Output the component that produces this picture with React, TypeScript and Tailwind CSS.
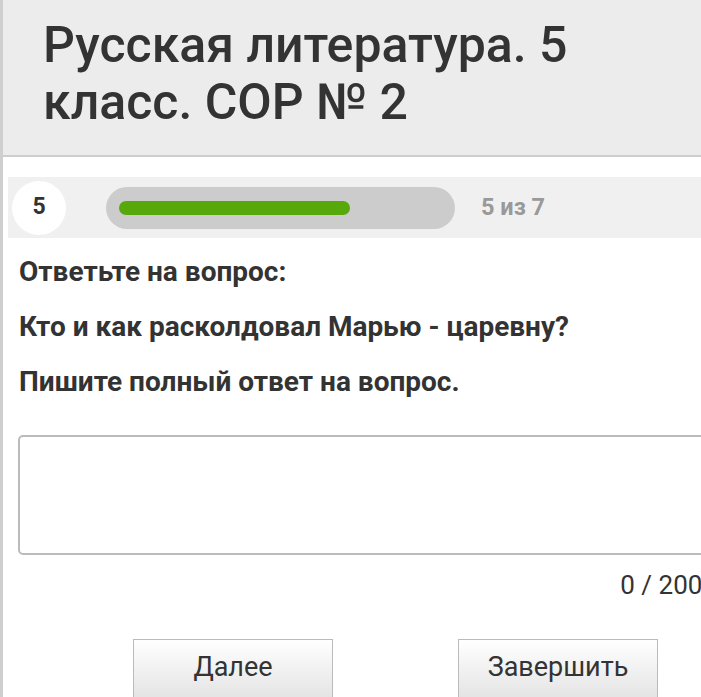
export default function App() {
  return (
    <div className="w-[701px] h-[697px] overflow-hidden bg-white" style={{ fontFamily: 'Roboto, "Noto Sans", sans-serif' }}>
      <div className="w-[790px] h-full border-l-[3px] border-[#cfcfcf]">
        <div className="h-[157px] bg-[#ececec] border-b-2 border-[#cdcdcd] pl-[40px] pt-[17px]">
          <h1 className="text-[50px] leading-[57px] text-[#333] font-medium">
            Русская литература. 5
            <br />
            класс. СОР № 2
          </h1>
        </div>
        <div className="mt-[20px] ml-[5px] h-[61px] bg-[#f0f0f0] flex items-center">
          <div className="ml-[4px] w-[54px] h-[54px] rounded-full bg-white flex items-center justify-center text-[23px] font-bold text-[#333]">
            5
          </div>
          <div className="ml-[40px] w-[349px] h-[42px] rounded-full bg-[#cccccc] flex items-center px-[13px]">
            <div className="w-[231px] h-[14px] rounded-full bg-[#57a80a]" />
          </div>
          <div className="ml-[26px] text-[23.5px] font-bold text-[#999]">5 из 7</div>
        </div>
        <div className="pl-[16px] pt-[17px] text-[28px] font-bold text-[#333]">
          <p className="h-[55px] leading-[33px]">Ответьте на вопрос:</p>
          <p className="h-[55px] leading-[33px]">Кто и как расколдовал Марью - царевну?</p>
          <p className="h-[55px] leading-[33px]">Пишите полный ответ на вопрос.</p>
        </div>
        <div className="ml-[15px] mt-[15px] w-[740px] h-[120px] border-2 border-[#bbbbbb] rounded-[5px]" />
        <div className="w-[714px] text-right mt-[14px] text-[26px] leading-[32px] text-[#333]">0 / 2000</div>
        <div className="mt-[38px] flex">
          <button className="ml-[130px] w-[200px] h-[60px] border border-[#bbbbbb] bg-gradient-to-b from-white to-[#e4e4e4] text-[27px] text-[#333] pb-[3px]">
            Далее
          </button>
          <button className="ml-[125px] w-[200px] h-[60px] border border-[#bbbbbb] bg-gradient-to-b from-white to-[#e4e4e4] text-[27px] text-[#333] pb-[3px]">
            Завершить
          </button>
        </div>
      </div>
    </div>
  );
}
